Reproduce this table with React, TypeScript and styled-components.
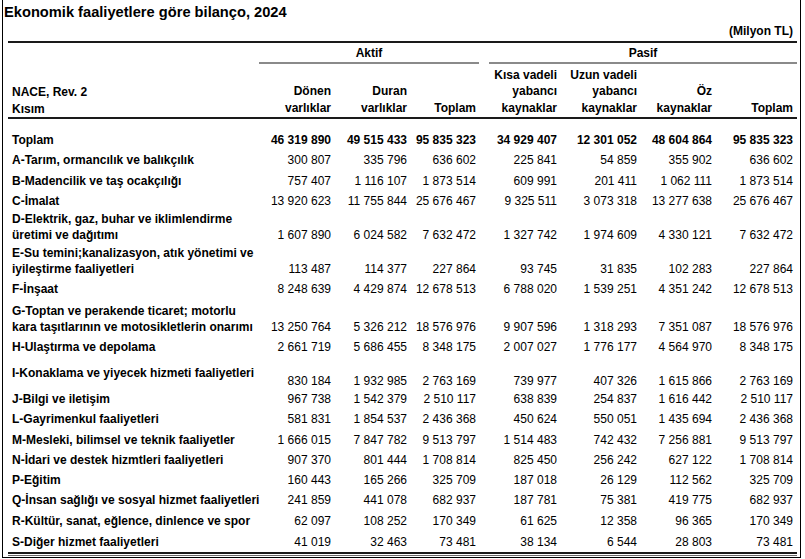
import React from "react";
import styled, { createGlobalStyle } from "styled-components";

const Global = createGlobalStyle`
  html, body { margin: 0; padding: 0; background: #fff; }
  body { font-family: "Liberation Sans", Arial, sans-serif; color: #000; }
`;

const COLS = "251px 75px 76px 69px 10px 71px 80px 75px 82px";

const Frame = styled.div`
  box-sizing: border-box;
  margin-left: 2px;
  width: 799px;
  height: 558px;
  padding-top: 4px;
  border-left: 1px solid #000;
  border-right: 1px solid #000;
  border-bottom: 1px solid #000;
`;

const Title = styled.div`
  font-size: 14.67px;
  font-weight: bold;
  line-height: 16px;
  padding-left: 1px;
  white-space: nowrap;
`;

const Inner = styled.div`
  margin: 0 3px 0 5px;
`;

const Unit = styled.div`
  height: 21px;
  display: flex;
  align-items: center;
  justify-content: flex-end;
  padding-right: 4px;
  font-size: 12px;
  font-weight: bold;
  line-height: 16px;
`;

const GroupRow = styled.div`
  display: grid;
  grid-template-columns: ${COLS};
  border-top: 2px solid #1a1a1a;
  height: 21px;
`;

const Group = styled.div<{ $col: string }>`
  grid-column: ${(p) => p.$col};
  border-bottom: 2px solid #8a8a8a;
  display: flex;
  align-items: center;
  justify-content: center;
  font-size: 12px;
  font-weight: bold;
  line-height: 16px;
`;

const HeadRow = styled.div`
  display: grid;
  grid-template-columns: ${COLS};
  height: 53px;
  align-items: end;
  border-bottom: 2px solid #1a1a1a;
`;

const HeadCell = styled.div<{ $label?: boolean; $last?: boolean }>`
  font-size: 12px;
  font-weight: bold;
  line-height: 16.5px;
  white-space: nowrap;
  text-align: ${(p) => (p.$label ? "left" : "right")};
  padding-left: ${(p) => (p.$label ? "4px" : "0")};
  padding-right: ${(p) => (p.$label ? "0" : p.$last ? "4px" : "3px")};
  padding-bottom: ${(p) => (p.$label ? "0" : "1px")};
`;

const Row = styled.div<{ $h: number }>`
  display: grid;
  grid-template-columns: ${COLS};
  height: ${(p) => p.$h}px;
  align-items: end;
`;

const Label = styled.div<{ $pb: number }>`
  font-size: 12px;
  font-weight: bold;
  line-height: 16px;
  padding-left: 4px;
  padding-bottom: ${(p) => p.$pb}px;
  white-space: nowrap;
`;

const Num = styled.div<{ $bold?: boolean; $last?: boolean }>`
  font-size: 12px;
  font-weight: ${(p) => (p.$bold ? "bold" : "normal")};
  line-height: 16px;
  padding-bottom: 2px;
  text-align: right;
  white-space: nowrap;
  padding-right: ${(p) => (p.$last ? "4px" : "3px")};
`;

const Spacer = styled.div``;

const BottomRule = styled.div`
  border-top: 2px solid #1a1a1a;
  border-bottom: 1px solid #6a6a6a;
  height: 1px;
`;

type R = { label: string[]; v: string[]; h: number; bold?: boolean; lpb?: number };

const rows: R[] = [
  { label: ["Toplam"], v: ["46 319 890", "49 515 433", "95 835 323", "34 929 407", "12 301 052", "48 604 864", "95 835 323"], h: 31, bold: true },
  { label: ["A-Tarım, ormancılık ve balıkçılık"], v: ["300 807", "335 796", "636 602", "225 841", "54 859", "355 902", "636 602"], h: 20 },
  { label: ["B-Madencilik ve taş ocakçılığı"], v: ["757 407", "1 116 107", "1 873 514", "609 991", "201 411", "1 062 111", "1 873 514"], h: 21 },
  { label: ["C-İmalat"], v: ["13 920 623", "11 755 844", "25 676 467", "9 325 511", "3 073 318", "13 277 638", "25 676 467"], h: 20 },
  { label: ["D-Elektrik, gaz, buhar ve iklimlendirme", "üretimi ve dağıtımı"], v: ["1 607 890", "6 024 582", "7 632 472", "1 327 742", "1 974 609", "4 330 121", "7 632 472"], h: 34 },
  { label: ["E-Su temini;kanalizasyon, atık yönetimi ve", "iyileştirme faaliyetleri"], v: ["113 487", "114 377", "227 864", "93 745", "31 835", "102 283", "227 864"], h: 34 },
  { label: ["F-İnşaat"], v: ["8 248 639", "4 429 874", "12 678 513", "6 788 020", "1 539 251", "4 351 242", "12 678 513"], h: 20 },
  { label: ["G-Toptan ve perakende ticaret; motorlu", "kara taşıtlarının ve motosikletlerin onarımı"], v: ["13 250 764", "5 326 212", "18 576 976", "9 907 596", "1 318 293", "7 351 087", "18 576 976"], h: 38 },
  { label: ["H-Ulaştırma ve depolama"], v: ["2 661 719", "5 686 455", "8 348 175", "2 007 027", "1 776 177", "4 564 970", "8 348 175"], h: 20 },
  { label: ["I-Konaklama ve yiyecek hizmeti faaliyetleri"], v: ["830 184", "1 932 985", "2 763 169", "739 977", "407 326", "1 615 866", "2 763 169"], h: 34, lpb: 10 },
  { label: ["J-Bilgi ve iletişim"], v: ["967 738", "1 542 379", "2 510 117", "638 839", "254 837", "1 616 442", "2 510 117"], h: 18 },
  { label: ["L-Gayrimenkul faaliyetleri"], v: ["581 831", "1 854 537", "2 436 368", "450 624", "550 051", "1 435 694", "2 436 368"], h: 20 },
  { label: ["M-Mesleki, bilimsel ve teknik faaliyetler"], v: ["1 666 015", "7 847 782", "9 513 797", "1 514 483", "742 432", "7 256 881", "9 513 797"], h: 21 },
  { label: ["N-İdari ve destek hizmtleri faaliyetleri"], v: ["907 370", "801 444", "1 708 814", "825 450", "256 242", "627 122", "1 708 814"], h: 20 },
  { label: ["P-Eğitim"], v: ["160 443", "165 266", "325 709", "187 018", "26 129", "112 562", "325 709"], h: 20 },
  { label: ["Q-İnsan sağlığı ve sosyal hizmet faaliyetleri"], v: ["241 859", "441 078", "682 937", "187 781", "75 381", "419 775", "682 937"], h: 20 },
  { label: ["R-Kültür, sanat, eğlence, dinlence ve spor"], v: ["62 097", "108 252", "170 349", "61 625", "12 358", "96 365", "170 349"], h: 21 },
  { label: ["S-Diğer hizmet faaliyetleri"], v: ["41 019", "32 463", "73 481", "38 134", "6 544", "28 803", "73 481"], h: 21 },
];

const lines = (arr: string[]) =>
  arr.map((s, i) => (
    <React.Fragment key={i}>
      {i > 0 && <br />}
      {s}
    </React.Fragment>
  ));

export default function App() {
  return (
    <>
      <Global />
      <Frame>
        <Title>Ekonomik faaliyetlere göre bilanço, 2024</Title>
        <Inner>
          <Unit>(Milyon TL)</Unit>
          <GroupRow>
            <Group $col="2 / 5">Aktif</Group>
            <Group $col="6 / 10">Pasif</Group>
          </GroupRow>
          <HeadRow>
            <HeadCell $label>{lines(["NACE, Rev. 2", "Kısım"])}</HeadCell>
            <HeadCell>{lines(["Dönen", "varlıklar"])}</HeadCell>
            <HeadCell>{lines(["Duran", "varlıklar"])}</HeadCell>
            <HeadCell>Toplam</HeadCell>
            <Spacer />
            <HeadCell>{lines(["Kısa vadeli", "yabancı", "kaynaklar"])}</HeadCell>
            <HeadCell>{lines(["Uzun vadeli", "yabancı", "kaynaklar"])}</HeadCell>
            <HeadCell>{lines(["Öz", "kaynaklar"])}</HeadCell>
            <HeadCell $last>Toplam</HeadCell>
          </HeadRow>
          {rows.map((r, i) => (
            <Row key={i} $h={r.h}>
              <Label $pb={r.lpb ?? 2}>{lines(r.label)}</Label>
              {r.v.slice(0, 3).map((n, j) => (
                <Num key={j} $bold={r.bold}>{n}</Num>
              ))}
              <Spacer />
              {r.v.slice(3).map((n, j) => (
                <Num key={j} $bold={r.bold} $last={j === 3}>{n}</Num>
              ))}
            </Row>
          ))}
          <BottomRule />
        </Inner>
      </Frame>
    </>
  );
}
